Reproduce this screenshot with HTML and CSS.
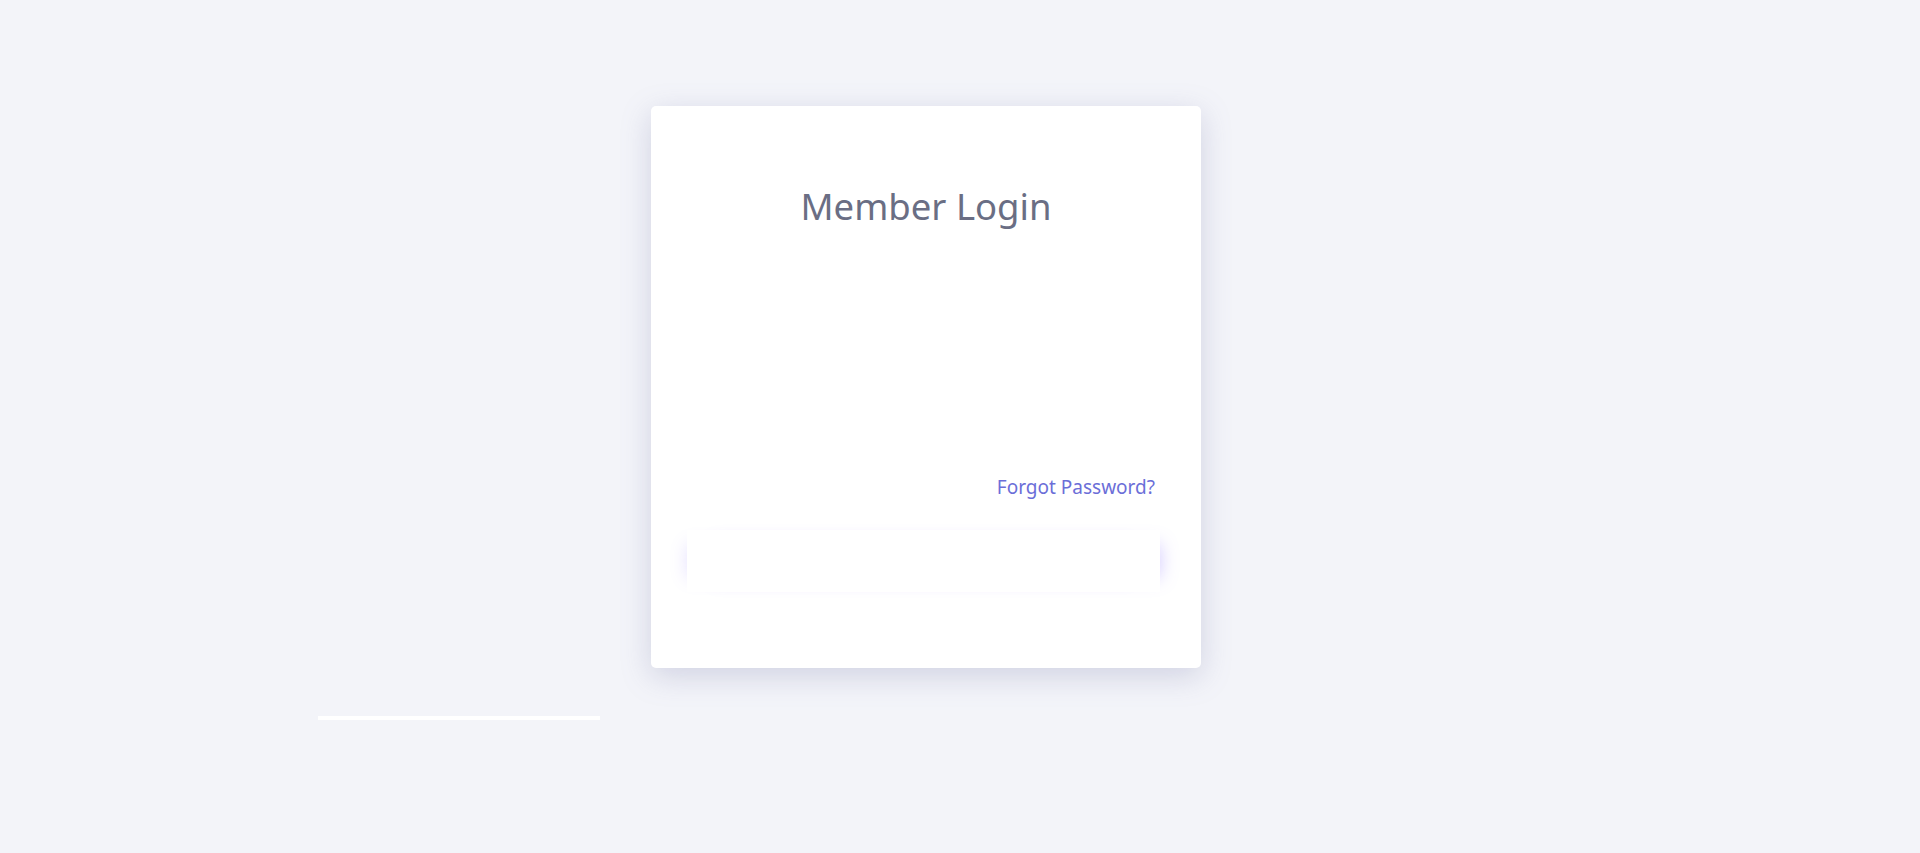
FILE: index.html
```html
<!DOCTYPE html>
<html lang="en">
<head>
<meta charset="utf-8">
<title>Member Login</title>
<link rel="stylesheet" href="styles.css">
</head>
<body>
<div class="page">
  <div class="card-row">
    <form class="card">
      <h1 class="title">Member Login</h1>
      <div class="fields"></div>
      <div class="forgot-row"><a class="forgot" href="#">Forgot Password?</a></div>
      <div class="btn-row"><button type="button" class="btn"></button></div>
    </form>
  </div>
  <div class="bar"></div>
</div>
</body>
</html>
```

FILE: styles.css
```css
html, body {
  margin: 0;
  padding: 0;
  background: #f3f4f9;
  font-family: "Noto Sans", "Open Sans", sans-serif;
}
.page {
  margin-left: 318px;
  width: 1216px;
  padding-top: 106px;
}
.card-row {
  display: flex;
  justify-content: center;
}
.card {
  width: 550px;
  height: 562px;
  box-sizing: border-box;
  background: #ffffff;
  border-radius: 5px;
  box-shadow: 0 8px 30px rgba(120, 122, 170, 0.28);
  padding: 76px 41px 0 36px;
  display: flex;
  flex-direction: column;
}
.title {
  margin: 0;
  text-align: center;
  font-weight: 400;
  font-size: 36.5px;
  line-height: 48px;
  color: #6a6e84;
  padding-left: 5px;
}
.fields {
  height: 244px;
}
.forgot-row {
  display: flex;
  justify-content: flex-end;
  padding-right: 5px;
}
.forgot {
  font-size: 19px;
  line-height: 26px;
  color: #6b6ed8;
  text-decoration: none;
}
.btn-row {
  margin-top: 30px;
}
.btn {
  display: block;
  width: 100%;
  height: 62px;
  border: 0;
  background: #ffffff;
  border-radius: 0;
  box-shadow: 14px 0 18px -14px rgba(125, 100, 255, 0.35), -14px 0 18px -14px rgba(125, 100, 255, 0.2);
}
.bar {
  margin-top: 48px;
  width: 282px;
  height: 4px;
  background: #ffffff;
}
```
